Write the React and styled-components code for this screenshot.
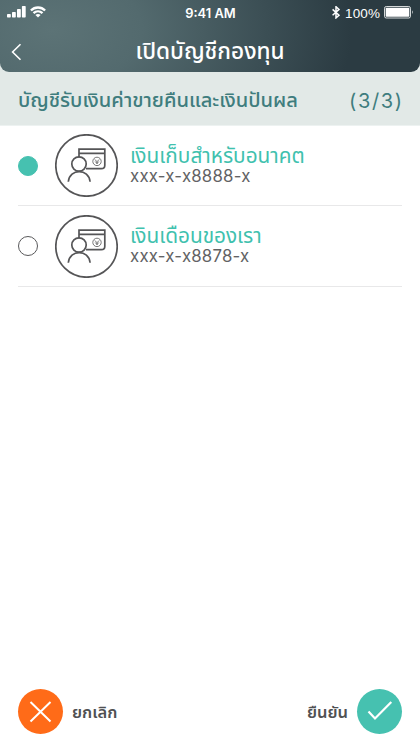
import React from "react";
import styled, { createGlobalStyle } from "styled-components";

const Global = createGlobalStyle`
  * { box-sizing: border-box; }
  body { margin: 0; background: #fff; }
`;
const Screen = styled.div`
  width: 420px;
  height: 748px;
  display: flex;
  flex-direction: column;
  overflow: hidden;
  background: #fff;
  color: #505153;
  font-family: "Noto Sans Thai", "Noto Sans", sans-serif;
  white-space: nowrap;
`;
const HeaderWrap = styled.div`
  background: #e2e9e7;
  height: 126px;
  flex: none;
  border-bottom: 1px solid #edf2f1;
`;
const Header = styled.header`
  height: 72px;
  border-radius: 0 0 9px 9px;
  color: #fff;
  background: radial-gradient(ellipse 300px 190px at 52px 30px, #5c7376 0%, #536a6e 30%, #3b4e54 72%, #2b3b42 100%);
`;
const StatusBar = styled.div`
  display: grid;
  grid-template-columns: 1fr auto 1fr;
  align-items: center;
  height: 24px;
  padding: 0 6px 0 7px;
  font-family: "Liberation Sans", sans-serif;
  font-size: 13.5px;
`;
const StatusSide = styled.div`
  display: flex;
  align-items: center;
  gap: 4px;
  padding-bottom: ${(p) => (p.$end ? 0 : 1)}px;
  justify-content: ${(p) => (p.$end ? "flex-end" : "flex-start")};
`;
const Percent = styled.span`
  padding-top: 2px;
  letter-spacing: 0.1px;
`;
const Clock = styled.span`
  padding-top: 2px;
  font-family: Inter, sans-serif;
  font-weight: 600;
  font-size: 12.9px;
`;
const NavBar = styled.div`
  display: grid;
  grid-template-columns: 40px 1fr 40px;
  height: 48px;
  align-items: center;
`;
const BackButton = styled.button`
  display: flex;
  border: 0;
  background: none;
  padding: 7px 0 0 11px;
`;
const Title = styled.h1`
  margin: 8px 0 0;
  text-align: center;
  font-size: 22.6px;
  line-height: 40px;
  font-weight: 500;
`;
const Section = styled.div`
  display: flex;
  justify-content: space-between;
  align-items: center;
  height: 54px;
  padding: 4px 18px 0;
  color: #3f7d7e;
  font-size: 20.1px;
  font-weight: 500;
`;
const Count = styled.span`
  font-family: Inter, sans-serif;
  font-size: 20px;
  font-weight: 400;
  letter-spacing: 1.6px;
  margin-right: -1.6px;
`;
const List = styled.main`
  flex: 1;
  padding: 0 18px;
`;
const Row = styled.div`
  display: flex;
  align-items: center;
  height: ${(p) => p.$height}px;
  border-bottom: 1px solid #e8e8e9;
`;
const Radio = styled.span`
  width: 20px;
  height: 20px;
  margin-right: 17px;
  border-radius: 50%;
  border: 1px solid ${(p) => (p.$on ? "#46c1b0" : "#59595b")};
  background: ${(p) => (p.$on ? "#46c1b0" : "#fff")};
`;
const Info = styled.div`
  display: flex;
  flex-direction: column;
  margin-left: 12px;
`;
const Name = styled.span`
  color: #3fc1ae;
  font-size: 20.8px;
  line-height: 21px;
`;
const Number = styled.span`
  font-family: Inter, sans-serif;
  font-size: 16.8px;
  line-height: 19px;
  letter-spacing: 0.22px;
  color: #626264;
`;
const Footer = styled.footer`
  display: flex;
  justify-content: space-between;
  height: 70px;
  padding: 10px 18px 0;
`;
const Action = styled.button`
  display: flex;
  align-items: center;
  gap: 9px;
  height: 46px;
  padding: 0;
  border: 0;
  background: none;
  color: #505153;
  font: 600 16.5px "Noto Sans Thai", "Noto Sans", sans-serif;
`;
const ActionLabel = styled.span`
  padding-top: 2px;
`;
const Round = styled.span`
  display: flex;
  width: 45px;
  height: 45px;
  border-radius: 50%;
  background: ${(p) => p.$color};
`;

const Signal = () => (
  <svg width="19" height="12" viewBox="0 0 19 12" fill="#fff">
    <rect x="0" y="8" width="3.8" height="3.5" rx=".7" />
    <rect x="5" y="6" width="3.8" height="5.5" rx=".7" />
    <rect x="10" y="3" width="3.8" height="8.5" rx=".7" />
    <rect x="14.9" y="0" width="3.8" height="11.5" rx=".7" />
  </svg>
);
const Wifi = () => (
  <svg width="16" height="12" viewBox="0 0 16 12" fill="none" stroke="#fff" strokeWidth="2.3">
    <path d="M.9 4.5C4.9.5 11.1.5 15.1 4.5M3.5 7.2c2.6-2.5 6.4-2.5 9 0" />
    <path d="M8 11.5 5.4 9c1.5-1.4 3.7-1.4 5.2 0Z" fill="#fff" stroke="none" />
  </svg>
);
const Bluetooth = () => (
  <svg width="9" height="13" viewBox="0 0 9 13" fill="none" stroke="#fff" strokeWidth="1.5">
    <path d="m.6 3.4 6.4 5.8-3 2.7V.7l3 2.7L.6 9.2" />
  </svg>
);
const Battery = () => (
  <svg width="30" height="13" viewBox="0 0 30 13">
    <rect x=".5" y=".5" width="26" height="11.5" rx="1.8" fill="none" stroke="#fff" strokeWidth=".8" />
    <rect x="1.7" y="1.7" width="23.6" height="9.1" rx=".7" fill="#fff" />
    <path d="M28 4.2q1.6 2 0 4.1Z" fill="#fff" />
  </svg>
);
const AccountIcon = () => (
  <svg width="63" height="63" viewBox="0 0 63 63" fill="none" stroke="#555557" strokeWidth="1.7">
    <circle cx="31.5" cy="31.5" r="30.7" />
    <path d="M24 23.5V15.2h25.8v16q0 3.5-3.5 3.5H31M24 19.3h26" />
    <circle cx="24" cy="30" r="7.2" />
    <path d="M13.3 47.8c1.2-13.6 20.6-13.6 21.8 0" />
    <circle cx="42" cy="27.4" r="4.2" strokeWidth=".8" />
    <path d="m39.8 25.4 2.2 2.3 2.2-2.3m-4 2.1 1.8 2 1.8-2M42 27.5v2.5" strokeWidth=".8" />
  </svg>
);

const accounts = [
  { name: "เงินเก็บสำหรับอนาคต", number: "xxx-x-x8888-x", on: true, height: 80 },
  { name: "เงินเดือนของเรา", number: "xxx-x-x8878-x", on: false, height: 81 },
];

export default function App() {
  return (
    <Screen>
      <Global />
      <HeaderWrap>
        <Header>
          <StatusBar>
            <StatusSide><Signal /><Wifi /></StatusSide>
            <Clock>9:41 AM</Clock>
            <StatusSide $end><Bluetooth /><Percent>100%</Percent><Battery /></StatusSide>
          </StatusBar>
          <NavBar>
            <BackButton>
              <svg width="11" height="18" viewBox="0 0 11 18" fill="none" stroke="#fff" strokeWidth="1.6">
                <path d="M9.5 1.2 1.6 9l7.9 7.8" />
              </svg>
            </BackButton>
            <Title>เปิดบัญชีกองทุน</Title>
          </NavBar>
        </Header>
        <Section>
          <span>บัญชีรับเงินค่าขายคืนและเงินปันผล</span>
          <Count>(3/3)</Count>
        </Section>
      </HeaderWrap>
      <List>
        {accounts.map((a) => (
          <Row key={a.number} $height={a.height}>
            <Radio $on={a.on} />
            <AccountIcon />
            <Info>
              <Name>{a.name}</Name>
              <Number>{a.number}</Number>
            </Info>
          </Row>
        ))}
      </List>
      <Footer>
        <Action>
          <Round $color="#ff6b18">
            <svg width="45" height="45" fill="none" stroke="#fff" strokeWidth="2">
              <path d="m12.5 13 20 19.5m0-19.5-20 19.5" />
            </svg>
          </Round>
          <ActionLabel>ยกเลิก</ActionLabel>
        </Action>
        <Action>
          <ActionLabel>ยืนยัน</ActionLabel>
          <Round $color="#46c1b0">
            <svg width="45" height="45" fill="none" stroke="#fff" strokeWidth="2.2">
              <path d="m11.5 22.5 6.5 7L34.3 13" />
            </svg>
          </Round>
        </Action>
      </Footer>
    </Screen>
  );
}
